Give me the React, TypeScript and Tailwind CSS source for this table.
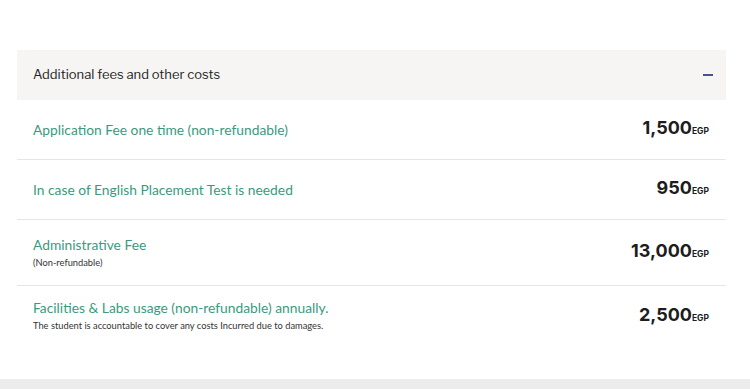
const ROWS = [
  { label: "Application Fee one time (non-refundable)", amount: "1,500", h: "h-[60px]" },
  { label: "In case of English Placement Test is needed", amount: "950", h: "h-[60px]" },
  { label: "Administrative Fee", note: "(Non-refundable)", amount: "13,000", h: "h-[66px]" },
  {
    label: "Facilities & Labs usage (non-refundable) annually.",
    note: "The student is accountable to cover any costs Incurred due to damages.",
    amount: "2,500",
    h: "h-[60px]"
  }
];

export default function App() {
  return (
    <div className="w-[750px] h-[389px] bg-white flex flex-col font-['Lato',sans-serif]">
      <div className="pt-[50px] pl-[17px] pr-[24px] flex-1">
        <div className="h-[50px] bg-[#f6f5f3] flex items-center justify-between pl-[16px] pr-[13px]">
          <span className="text-[13px] text-[#222] font-['Libre_Franklin','Lato',sans-serif]">
            Additional fees and other costs
          </span>
          <span className="w-[10px] h-[1.5px] bg-[#4b4f8f]" />
        </div>
        {ROWS.map((r, i) => (
          <div
            key={i}
            className={`${r.h} flex items-center justify-between pl-[16px] pr-[17px] ${
              i < ROWS.length - 1 ? "border-b border-[#e6e6e6]" : ""
            }`}
          >
            <div className="flex flex-col">
              <span className="text-[13.8px] leading-[16px] text-[#3a9a80]">{r.label}</span>
              {r.note && <span className="text-[9.3px] leading-[12px] mt-[4px] text-[#333]">{r.note}</span>}
            </div>
            <div className="flex items-baseline mb-[4px] font-['Inter',sans-serif]">
              <span className="text-[18px] font-bold text-[#1d1d1d]">{r.amount}</span>
              <span className="text-[8.5px] font-bold text-[#1d1d1d]">EGP</span>
            </div>
          </div>
        ))}
      </div>
      <div className="h-[10px] bg-[#ececec]" />
    </div>
  );
}
